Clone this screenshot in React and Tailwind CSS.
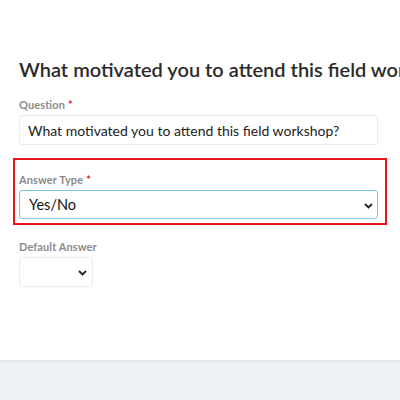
function Chevron({ className }) {
    return (
        <svg
            className={className}
            width="9"
            height="6"
            viewBox="0 0 9 6"
            fill="none"
        >
            <path d="M1 1l3.5 3.5L8 1" stroke="#222" strokeWidth="1.8" />
        </svg>
    );
}

function Label({ children, required }) {
    return (
        <div className="text-[11px] font-bold text-[#8b8b8b] leading-none tracking-[0.1px]">
            {children}
            {required && <span className="text-[#e0242b] ml-[3px]">*</span>}
        </div>
    );
}

export default function App() {
    return (
        <div
            className="w-[400px] h-[400px] bg-[#eef1f6] overflow-hidden"
            style={{ fontFamily: "Lato, 'Noto Sans', sans-serif" }}
        >
            {/* CARD */}
            <div className="h-[360px] bg-white shadow-[0_1px_4px_rgba(0,0,0,0.08)] overflow-hidden pt-[57px]">

                {/* TITLE */}
                <h1 className="pl-[19px] text-[20px] font-semibold text-[#2b2b2b] whitespace-nowrap overflow-hidden leading-[24px]">
                    What motivated you to attend this field workshop?
                </h1>

                {/* QUESTION */}
                <div className="mt-[18px] pl-[19px]">
                    <Label required>Question</Label>
                    <div className="mt-[5px] w-[359px] h-[30px] border border-[#ececec] rounded-[2px] flex items-center pl-[8px] text-[14px] text-[#222]">
                        What motivated you to attend this field workshop?
                    </div>
                </div>

                {/* ANSWER TYPE */}
                <div className="mt-[13px] ml-[13px] w-[374px] h-[67px] border-2 border-[#e8141b] px-[4px] pt-[14px]">
                    <Label required>Answer Type</Label>
                    <div className="relative mt-[5px] w-[359px] h-[29px] border border-[#7ec8ef] rounded-[3px] flex items-center pl-[9px] text-[14.5px] text-[#111]">
                        Yes/No
                        <Chevron className="absolute right-[4px] top-[12px]" />
                    </div>
                </div>

                {/* DEFAULT ANSWER */}
                <div className="mt-[16px] pl-[19px]">
                    <Label>Default Answer</Label>
                    <div className="relative mt-[5px] w-[74px] h-[30px] border border-[#ececec] rounded-[3px]">
                        <Chevron className="absolute right-[5px] top-[12px]" />
                    </div>
                </div>
            </div>
        </div>
    );
}
